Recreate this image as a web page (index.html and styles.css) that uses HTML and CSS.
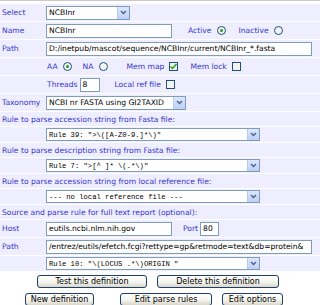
FILE: index.html
```html
<!DOCTYPE html>
<html>
<head>
<meta charset="utf-8">
<link rel="stylesheet" href="styles.css">
</head>
<body>
<div class="form">
  <div class="row">
    <div class="lab">Select</div>
    <div class="cell"><div class="sel w84"><span class="st">NCBInr</span><span class="arr"><svg width="7" height="5" viewBox="0 0 7 5"><path d="M1 1 L3.5 3.5 L6 1" fill="none" stroke="#4d6185" stroke-width="1.4"/></svg></span></div></div>
  </div>
  <div class="row">
    <div class="lab">Name</div>
    <div class="cell"><div class="inp w126">NCBInr</div><span class="t ml16">Active</span><span class="radio on"></span><span class="t ml13">Inactive</span><span class="radio"></span></div>
  </div>
  <div class="row">
    <div class="lab">Path</div>
    <div class="cell"><div class="inp w266">D:/inetpub/mascot/sequence/NCBInr/current/NCBInr_*.fasta</div></div>
  </div>
  <div class="row">
    <div class="lab"></div>
    <div class="cell"><span class="t ml1">AA</span><span class="radio on"></span><span class="t ml11">NA</span><span class="radio"></span><span class="t ml19">Mem map</span><span class="check on"><svg width="9" height="9" viewBox="0 0 9 9"><path d="M1.5 4.5 L3.5 6.5 L7.5 2" fill="none" stroke="#21a121" stroke-width="1.5"/></svg></span><span class="t ml12">Mem lock</span><span class="check"></span></div>
  </div>
  <div class="row">
    <div class="lab"></div>
    <div class="cell"><span class="t ml1">Threads</span><div class="inp w20 ml2">8</div><span class="t ml15">Local ref file</span><span class="check"></span></div>
  </div>
  <div class="row">
    <div class="lab">Taxonomy</div>
    <div class="cell"><div class="sel w140"><span class="st">NCBI nr FASTA using GI2TAXID</span><span class="arr"><svg width="7" height="5" viewBox="0 0 7 5"><path d="M1 1 L3.5 3.5 L6 1" fill="none" stroke="#4d6185" stroke-width="1.4"/></svg></span></div></div>
  </div>
  <div class="row trow"><div class="t">Rule to parse accession string from Fasta file:</div></div>
  <div class="row srow">
    <div class="lab"></div>
    <div class="cell"><div class="sel sm w214"><span class="st mono">Rule 39: "&gt;\([A-Z0-9.]*\)"</span><span class="arr"><svg width="7" height="5" viewBox="0 0 7 5"><path d="M1 1 L3.5 3.5 L6 1" fill="none" stroke="#4d6185" stroke-width="1.4"/></svg></span></div></div>
  </div>
  <div class="row trow"><div class="t">Rule to parse description string from Fasta file:</div></div>
  <div class="row srow">
    <div class="lab"></div>
    <div class="cell"><div class="sel sm w214"><span class="st mono">Rule 7: "&gt;[^ ]* \(.*\)"</span><span class="arr"><svg width="7" height="5" viewBox="0 0 7 5"><path d="M1 1 L3.5 3.5 L6 1" fill="none" stroke="#4d6185" stroke-width="1.4"/></svg></span></div></div>
  </div>
  <div class="row trow"><div class="t">Rule to parse accession string from local reference file:</div></div>
  <div class="row srow">
    <div class="lab"></div>
    <div class="cell"><div class="sel sm w214"><span class="st mono">--- no local reference file ---</span><span class="arr"><svg width="7" height="5" viewBox="0 0 7 5"><path d="M1 1 L3.5 3.5 L6 1" fill="none" stroke="#4d6185" stroke-width="1.4"/></svg></span></div></div>
  </div>
  <div class="row trow"><div class="t">Source and parse rule for full text report (optional):</div></div>
  <div class="row">
    <div class="lab">Host</div>
    <div class="cell"><div class="inp w126">eutils.ncbi.nlm.nih.gov</div><span class="t ml11">Port</span><div class="inp w19 ml2">80</div></div>
  </div>
  <div class="row">
    <div class="lab">Path</div>
    <div class="cell"><div class="inp w266">/entrez/eutils/efetch.fcgi?rettype=gp&amp;retmode=text&amp;db=protein&amp;</div></div>
  </div>
  <div class="row srow">
    <div class="lab"></div>
    <div class="cell"><div class="sel sm w214"><span class="st mono">Rule 10: "\(LOCUS .*\)ORIGIN "</span><span class="arr"><svg width="7" height="5" viewBox="0 0 7 5"><path d="M1 1 L3.5 3.5 L6 1" fill="none" stroke="#4d6185" stroke-width="1.4"/></svg></span></div></div>
  </div>
  <div class="brow b1">
    <button class="btn bw110">Test this definition</button>
    <button class="btn bw122">Delete this definition</button>
  </div>
  <div class="brow b2">
    <button class="btn bw69">New definition</button>
    <button class="btn bw92">Edit parse rules</button>
    <button class="btn bw61">Edit options</button>
  </div>
</div>
</body>
</html>
```
FILE: styles.css
```css
html, body { margin: 0; padding: 0; background: #fff; }
body { font-family: "DejaVu Sans", Verdana, sans-serif; font-size: 7.6px; color: #000; }
.form { width: 320px; padding-top: 3px; border-top: 1px solid #c8c8c8; }
.row { display: flex; align-items: center; background: #eeeeff; margin-bottom: 1px; height: 17px; }
.srow { height: 15px; }
.trow { height: 14px; padding-left: 2px; }
.lab { width: 44px; padding-left: 2px; box-sizing: border-box; color: #3636cc; flex: none; }
.cell { display: flex; align-items: center; margin-left: 2px; }
.t { color: #3636cc; white-space: nowrap; }
.inp { height: 14px; box-sizing: border-box; border: 1px solid #7f9db9; background: #fff; padding: 0 2px; line-height: 12px; white-space: nowrap; overflow: hidden; }
.sel { height: 14px; box-sizing: border-box; border: 1px solid #7f9db9; background: #fff; display: flex; align-items: center; justify-content: space-between; padding-left: 2px; overflow: hidden; }
.sel.sm { height: 13px; }
.st { white-space: nowrap; overflow: hidden; }
.mono { font-family: "Liberation Mono", "Courier New", monospace; font-size: 7.2px; }
.arr { width: 12px; height: 12px; flex: none; background: linear-gradient(#dbe7fd, #bcd0f8); border-left: 1px solid #b8c9ef; display: flex; align-items: center; justify-content: center; box-sizing: border-box; }
.sm .arr { height: 11px; }
.radio { width: 9px; height: 9px; border: 1px solid #1c5180; border-radius: 50%; background: #f4f4f0; margin-left: 5px; box-sizing: border-box; position: relative; flex: none; }
.radio.on::after { content: ""; position: absolute; left: 2px; top: 2px; width: 3px; height: 3px; border-radius: 50%; background: #21a121; }
.check { width: 9px; height: 9px; border: 1px solid #1c5180; background: #f4f4f0; margin-left: 5px; box-sizing: border-box; flex: none; display: flex; align-items: center; justify-content: center; }
.check svg { flex: none; }
.w84 { width: 84px; }
.w126 { width: 126px; }
.w266 { width: 266px; }
.w140 { width: 140px; }
.w214 { width: 214px; }
.w20 { width: 20px; }
.w19 { width: 19px; }
.ml1 { margin-left: 1px; }
.ml2 { margin-left: 2px; }
.ml11 { margin-left: 11px; }
.ml12 { margin-left: 12px; }
.ml13 { margin-left: 13px; }
.ml15 { margin-left: 15px; }
.ml16 { margin-left: 16px; }
.ml19 { margin-left: 19px; }
.brow { display: flex; align-items: center; height: 18px; }
.b1 { gap: 10px; padding-left: 37px; }
.b2 { padding-left: 25px; }
.b2 .bw92 { margin-left: 26px; margin-right: 10px; }
.btn { height: 13px; font-family: "DejaVu Sans", Verdana, sans-serif; font-size: 8px; color: #000; border: 1px solid #1e3f6a; border-radius: 3px; background: linear-gradient(#ffffff, #f2f2ec 60%, #d9d4c8); padding: 0; line-height: 11px; white-space: nowrap; }
.bw110 { width: 110px; }
.bw122 { width: 122px; }
.bw69 { width: 69px; }
.bw92 { width: 92px; }
.bw61 { width: 61px; }
```
